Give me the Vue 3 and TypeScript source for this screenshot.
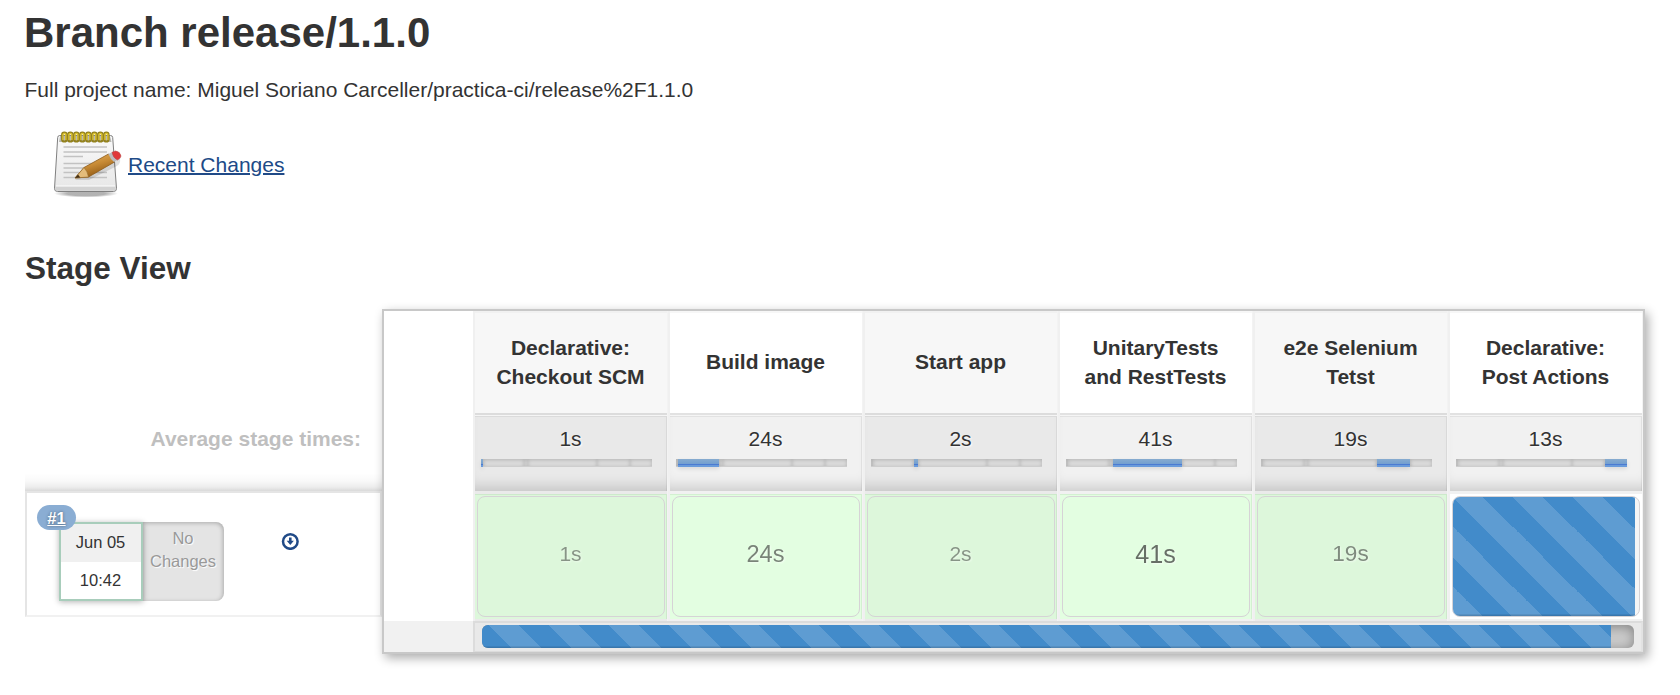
<script setup lang="ts">
interface Stage {
  name: string[]
  avg: string
  run: string
  size: number
  opacity: number
}

const stages: Stage[] = [
  { name: ['Declarative:', 'Checkout SCM'], avg: '1s', run: '1s', size: 21, opacity: 0.5 },
  { name: ['Build image'], avg: '24s', run: '24s', size: 23.6, opacity: 0.6 },
  { name: ['Start app'], avg: '2s', run: '2s', size: 21, opacity: 0.5 },
  { name: ['UnitaryTests', 'and RestTests'], avg: '41s', run: '41s', size: 25.2, opacity: 0.7 },
  { name: ['e2e Selenium', 'Tetst'], avg: '19s', run: '19s', size: 22.6, opacity: 0.55 },
  { name: ['Declarative:', 'Post Actions'], avg: '13s', run: '', size: 21, opacity: 0.5 },
]

// Share of the total run time taken by each stage
const segments: number[] = [2, 41, 4, 69, 33, 22]
const rings: number[] = [0, 1, 2, 3, 4, 5, 6, 7]
</script>

<template>
  <main class="page">
    <h1>Branch release/1.1.0</h1>
    <p class="project">Full project name: Miguel Soriano Carceller/practica-ci/release%2F1.1.0</p>

    <div class="changes">
      <svg class="notepad" width="72" height="72" viewBox="0 0 72 72">
        <defs>
          <linearGradient id="paper" x1="0" y1="0" x2="0" y2="1">
            <stop offset="0" stop-color="#fafafa" />
            <stop offset="1" stop-color="#e6e6e6" />
          </linearGradient>
          <linearGradient id="wood" x1="0" y1="0" x2="0.5" y2="1">
            <stop offset="0" stop-color="#eebd68" />
            <stop offset="0.55" stop-color="#c78a35" />
            <stop offset="1" stop-color="#8d5713" />
          </linearGradient>
          <radialGradient id="ground">
            <stop offset="0.6" stop-color="#000" stop-opacity="0.3" />
            <stop offset="1" stop-color="#000" stop-opacity="0" />
          </radialGradient>
        </defs>
        <ellipse cx="36" cy="64.500" rx="32" ry="4" fill="url(#ground)" />
        <path d="M9.500 6.500H60.500Q62.500 6.500 62.700 8.500L66.500 59.500Q66.500 62.500 63.500 62.500H7.500Q4.500 62.500 4.500 59.500L7.700 8.500Q7.900 6.500 9.500 6.500Z" fill="url(#paper)" stroke="#808080" />
        <path d="M10 7H60L61.500 13H9Z" fill="#b9b9b3" />
        <path d="M5.500 57H65.500L65.800 59.500Q65.800 61.800 63.500 61.800H7.500Q5.200 61.800 5.200 59.500Z" fill="#d2d2d2" />
        <path d="M6 57H65" stroke="#fff" />
        <path d="M13.500 18H57M13.500 23H57M13.500 27.500H33M13.500 34.500H57M13.500 39H50M13.500 43.500H57M13.500 48.500H57" stroke="#c2c2c2" stroke-width="1.600" />
        <g v-for="n in rings" :key="n">
          <rect :x="12.200 + n * 6" y="3.500" width="4.300" height="9" rx="2" fill="none" stroke="#94821c" stroke-width="2.200" />
          <path :d="`M${12.900 + n * 6} 11V5.500q1.500-2 3 0v5.500`" fill="none" stroke="#ddc431" stroke-width="1.300" />
        </g>
        <path d="M25 51L36 43L61 28Q66 26 70 30Q71 34 67 37L39 51Z" fill="#000" opacity="0.12" />
        <path d="M25 49L34 38.500L58.500 25L64.500 33L38.500 48Z" fill="url(#wood)" stroke="#8d5a19" stroke-width="0.800" />
        <path d="M25 49L34 38.500Q37.500 42 38.500 48Z" fill="#e3bc7b" stroke="#8d6428" stroke-width="0.600" />
        <path d="M25 49L28 45.500L30.300 48.500Z" fill="#443016" />
        <path d="M58.300 25L62 23.300L67.500 31L64 33Q60.500 30.500 58.300 25Z" fill="#bcbcc0" />
        <path d="M62 23.300L65.500 22Q70 22.500 71 27Q70.500 29.800 67.500 31Q63 29 62 23.300Z" fill="#e1383b" stroke="#b5494a" stroke-width="0.600" />
      </svg>
      <a>Recent Changes</a>
    </div>

    <h2>Stage View</h2>

    <section class="view">
      <div class="left">
        <div class="avg-label">Average stage times:</div>
        <div class="job">
          <div class="start">
            <div class="date">Jun 05</div>
            <div class="time">10:42</div>
          </div>
          <div class="commits">No<br />Changes</div>
          <a class="badge">#1</a>
          <svg class="download" width="18" height="18" viewBox="0 0 18 18">
            <circle cx="9.300" cy="9.500" r="7.300" fill="none" stroke="#204a87" stroke-width="2.500" />
            <path d="M8 5.500H10.600V8.800H12.900L9.300 13L5.700 8.800H8Z" fill="#204a87" />
          </svg>
        </div>
      </div>

      <div class="board">
        <div class="gutter"></div>
        <div v-for="(s, i) in stages" :key="i" class="stage" :class="{ odd: i % 2 === 0 }">
          <div class="head"><div><div v-for="line in s.name" :key="line">{{ line }}</div></div></div>
          <div class="avg">
            <div class="avg-time">{{ s.avg }}</div>
            <div class="bar">
              <i v-for="(w, j) in segments" :key="j" :class="{ on: i === j }" :style="{ width: w + 'px' }"></i>
            </div>
          </div>
          <div class="run" :class="{ active: !s.run }">
            <div class="card">
              <span v-if="s.run" :style="{ fontSize: s.size + 'px', opacity: s.opacity }">{{ s.run }}</span>
              <div v-else class="stripes block"></div>
            </div>
          </div>
        </div>
        <div class="foot-gutter"></div>
        <div class="foot">
          <div class="track"><div class="stripes total"></div></div>
        </div>
      </div>
    </section>
  </main>
</template>

<style>
body {
  margin: 0;
  background: #fff;
}
</style>

<style scoped>
* {
  box-sizing: border-box;
}
.page {
  width: 1680px;
  height: 695px;
  overflow: hidden;
  padding: 9px 35px 0 25px;
  font-family: "Liberation Sans", Arial, sans-serif;
  font-size: 21px;
  color: #333;
}
h1 {
  margin: 0 0 0 -1px;
  font-size: 42px;
  line-height: 48px;
}
.project {
  margin: 18px 0 0 -0.5px;
  line-height: 30px;
}
.changes {
  display: flex;
  align-items: center;
  height: 72px;
  margin: 24px 0 0 25px;
}
.changes a {
  margin-left: 6px;
  color: #204a87;
  line-height: 30px;
  text-decoration: underline;
  text-decoration-thickness: 2px;
}
h2 {
  margin: 48px 0 0;
  font-size: 31.5px;
  line-height: 38px;
}
.view {
  display: flex;
  margin-top: 22px;
}
.left {
  width: 357px;
  flex: none;
  padding-top: 108px;
}
.avg-label {
  height: 74px;
  padding: 7px 21px 0 0;
  line-height: 30px;
  text-align: right;
  font-weight: bold;
  color: #bfbfbf;
  background: linear-gradient(to top, rgba(0, 0, 0, 0.15), rgba(0, 0, 0, 0.07) 4px, rgba(0, 0, 0, 0.025) 10px, transparent 18px);
}
.job {
  position: relative;
  display: flex;
  height: 126px;
  padding: 29px 0 0 32px;
  border: 2px solid #e5e5e5;
  border-bottom-color: #f1f1f1;
}
.start {
  width: 84px;
  height: 79px;
  border: 2px solid #a8cdbb;
  box-shadow: 0 1px 6px rgba(0, 0, 0, 0.3);
  z-index: 1;
  background: #fff;
  font-size: 16.5px;
  text-align: center;
}
.date {
  height: 38px;
  padding-right: 1px;
  line-height: 37px;
  background: #f0f0f0;
}
.time {
  padding-right: 1px;
  line-height: 37px;
}
.commits {
  width: 81px;
  height: 79px;
  padding: 5px 1px 0 0;
  border-radius: 0 8px 8px 0;
  background: #e4e4e4;
  box-shadow: inset -1px 1px 4px rgba(0, 0, 0, 0.25);
  color: #999;
  font-size: 16.5px;
  line-height: 23px;
  text-align: center;
  text-shadow: 1px 1px 1px #fff;
}
.badge {
  position: absolute;
  z-index: 2;
  left: 10px;
  top: 12px;
  width: 39px;
  height: 25px;
  border-radius: 13px;
  background: #8aadd3;
  color: #fff;
  font-size: 16.5px;
  font-weight: bold;
  line-height: 27px;
  text-align: center;
  text-decoration: underline;
  text-shadow: 0 0 3px rgba(0, 0, 0, 0.45);
}
.download {
  margin: 10px 0 0 57px;
}
.board {
  display: grid;
  grid-template-columns: 89px repeat(6, 195px);
  grid-template-rows: 310px 31px;
  width: 1263px;
  height: 345px;
  flex: none;
  border: 2px solid #c8c8c8;
  background: #fff;
  box-shadow: 3px 4px 10px rgba(0, 0, 0, 0.33);
  z-index: 3;
}
.stage {
  border-left: 2px solid #f0f0f0;
  border-right: 1px solid #f3f3f3;
}
.head {
  display: flex;
  align-items: center;
  justify-content: center;
  height: 104px;
  padding: 0 1px 3px 0;
  border-top: 2px solid #f7f7f7;
  border-bottom: 2px solid #e2e2e2;
  font-weight: bold;
  line-height: 29px;
  text-align: center;
}
.odd .head {
  background: #f7f7f7;
  border-top-color: #f1f1f1;
  border-bottom-color: #dcdcdc;
}
.avg {
  height: 76px;
  padding-top: 8px;
  border-top: 1px solid #f5f5f5;
  background: #f1f1f1;
  box-shadow: inset -1px 1px 0 rgba(0, 0, 0, 0.06), inset 0 -14px 14px -10px rgba(0, 0, 0, 0.17);
}
.odd .avg {
  background: #e9e9e9;
}
.avg-time {
  padding-right: 1px;
  line-height: 30px;
  text-align: center;
  text-shadow: 1px 1px 2px #fff;
}
.bar {
  display: flex;
  width: 171px;
  height: 8px;
  margin: 5px 0 0 6px;
  background: #dedede;
  border-bottom: 1px solid #cecece;
}
.bar i {
  height: 7px;
  box-shadow: inset 0 1px 4px rgba(0, 0, 0, 0.2);
}
.bar .on {
  height: 8px;
  background: linear-gradient(#87abcf 0, #739fd0 62.5%, #4b7bd2 62.5%, #4b7bd2 75%, #6a9bdb 75%);
  box-shadow: 0 2px 4px rgba(0, 0, 0, 0.1);
}
.run {
  height: 130px;
  padding: 2px 2px 3px;
  border-top: 3px solid #f1f1f1;
  border-bottom: 2px solid #f1f1f1;
  background: #e3fee1;
  box-shadow: inset -1px 1px 0 rgba(0, 60, 0, 0.07);
}
.odd .run {
  background: #ddf7db;
  border-color: #eaeaea;
}
.run.active {
  background: #fff;
  box-shadow: none;
}
.card {
  display: flex;
  align-items: center;
  justify-content: center;
  width: 188px;
  height: 121px;
  border: 1px solid #d6d3d6;
  border-radius: 8px;
  overflow: hidden;
}
.card span {
  padding: 0 1px 5px 0;
  line-height: 30px;
  text-shadow: 1px 1px 2px #fff;
}
.active .card {
  justify-content: flex-start;
  background: #f5f5f5;
}
.stripes {
  background-color: #428bca;
  background-image: linear-gradient(45deg, rgba(255, 255, 255, 0.15) 25%, transparent 25%, transparent 50%, rgba(255, 255, 255, 0.15) 50%, rgba(255, 255, 255, 0.15) 75%, transparent 75%);
  background-size: 60px 60px;
  box-shadow: inset 0 -1.5px 0 rgba(0, 0, 0, 0.15);
}
.block {
  width: 182px;
  height: 119px;
}
.foot-gutter {
  background: #f1f1f1;
}
.foot {
  grid-column: 2 / 8;
  padding: 2px 7px 0 7px;
  border: 2px solid #dcdcdc;
  border-right-color: #e2e2e2;
  border-bottom-width: 1px;
  background: #e9e9e9;
}
.track {
  height: 23px;
  overflow: hidden;
  border-radius: 6px;
  background: #cacaca;
  box-shadow: inset 0 2px 12px rgba(0, 0, 0, 0.35);
}
.total {
  width: 1129px;
  height: 23px;
  background-position: 7px 0;
}
</style>
